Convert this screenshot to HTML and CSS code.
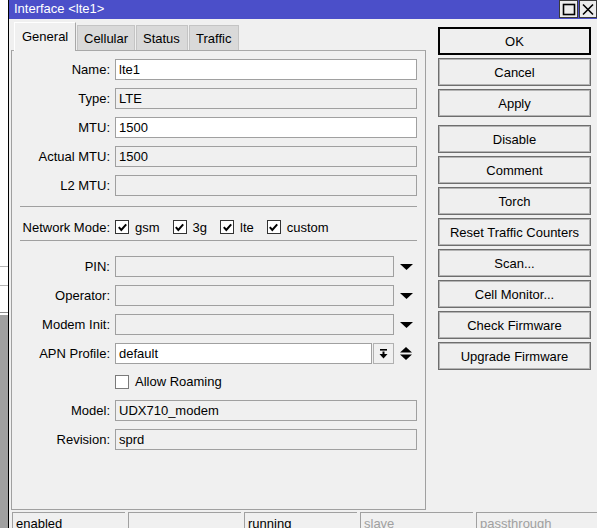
FILE: index.html
```html
<!DOCTYPE html>
<html>
<head>
<meta charset="utf-8">
<title>Interface &lt;lte1&gt;</title>
<link rel="stylesheet" href="styles.css">
</head>
<body>
<div class="screen">
  <div class="desk">
    <div class="desk-gap g0"></div>
    <div class="desk-line"></div>
    <div class="desk-gap g1"></div>
    <div class="desk-line"></div>
    <div class="desk-gap g2"></div>
    <div class="desk-line dark"></div>
    <div class="desk-gap g3"></div>
    <div class="desk-fill"></div>
  </div>
  <div class="edge"></div>
  <div class="window">
    <div class="titlebar">
      <span class="title">Interface &lt;lte1&gt;</span>
      <div class="winbtns">
        <span class="wbtn"><svg width="14" height="13" viewBox="0 0 14 13"><rect x="1.5" y="1.5" width="11" height="10" fill="none" stroke="#000" stroke-width="1.6"/></svg></span>
        <span class="wbtn"><svg width="14" height="13" viewBox="0 0 14 13"><path d="M2 1.5 L12 11.5 M12 1.5 L2 11.5" stroke="#000" stroke-width="1.6" fill="none"/></svg></span>
      </div>
    </div>
    <div class="body">
      <div class="left">
        <div class="tabs">
          <span class="tab active">General</span>
          <span class="tab">Cellular</span>
          <span class="tab">Status</span>
          <span class="tab">Traffic</span>
        </div>
        <div class="panel">
          <div class="row"><span class="label">Name:</span><span class="field edit">lte1</span></div>
          <div class="row"><span class="label">Type:</span><span class="field">LTE</span></div>
          <div class="row"><span class="label">MTU:</span><span class="field edit">1500</span></div>
          <div class="row"><span class="label">Actual MTU:</span><span class="field">1500</span></div>
          <div class="row"><span class="label">L2 MTU:</span><span class="field"></span></div>
          <div class="sep first"></div>
          <div class="netrow">
            <span class="label">Network Mode:</span>
            <span class="opt"><span class="cb on"><svg width="11" height="11" viewBox="0 0 11 11"><path d="M1.8 5.2 L4.3 8 L9.2 2.4" fill="none" stroke="#000" stroke-width="2"/></svg></span>gsm</span>
            <span class="opt"><span class="cb on"><svg width="11" height="11" viewBox="0 0 11 11"><path d="M1.8 5.2 L4.3 8 L9.2 2.4" fill="none" stroke="#000" stroke-width="2"/></svg></span>3g</span>
            <span class="opt"><span class="cb on"><svg width="11" height="11" viewBox="0 0 11 11"><path d="M1.8 5.2 L4.3 8 L9.2 2.4" fill="none" stroke="#000" stroke-width="2"/></svg></span>lte</span>
            <span class="opt"><span class="cb on"><svg width="11" height="11" viewBox="0 0 11 11"><path d="M1.8 5.2 L4.3 8 L9.2 2.4" fill="none" stroke="#000" stroke-width="2"/></svg></span>custom</span>
          </div>
          <div class="sep second"></div>
          <div class="row pin"><span class="label">PIN:</span><span class="field"></span><span class="arrow"><svg width="13" height="6" viewBox="0 0 13 6"><polygon points="0,0 13,0 6.5,6" fill="#000"/></svg></span></div>
          <div class="row"><span class="label">Operator:</span><span class="field"></span><span class="arrow"><svg width="13" height="6" viewBox="0 0 13 6"><polygon points="0,0 13,0 6.5,6" fill="#000"/></svg></span></div>
          <div class="row"><span class="label">Modem Init:</span><span class="field"></span><span class="arrow"><svg width="13" height="6" viewBox="0 0 13 6"><polygon points="0,0 13,0 6.5,6" fill="#000"/></svg></span></div>
          <div class="row"><span class="label">APN Profile:</span><span class="field edit">default</span><span class="fbtn"><svg width="9" height="10" viewBox="0 0 9 10"><rect x="1" y="0" width="7" height="1.6" fill="#000"/><rect x="3.5" y="2.5" width="2" height="3" fill="#000"/><polygon points="0.5,5 8.5,5 4.5,9.5" fill="#000"/></svg></span><span class="arrow updown"><svg width="12" height="13" viewBox="0 0 12 13"><polygon points="6,0 12,5.5 0,5.5" fill="#000"/><polygon points="0,7.5 12,7.5 6,13" fill="#000"/></svg></span></div>
          <div class="roam"><span class="label"></span><span class="opt"><span class="cb off"></span>Allow Roaming</span></div>
          <div class="row"><span class="label">Model:</span><span class="field">UDX710_modem</span></div>
          <div class="row"><span class="label">Revision:</span><span class="field">sprd</span></div>
        </div>
      </div>
      <div class="right">
        <div class="btn ok">OK</div>
        <div class="btn">Cancel</div>
        <div class="btn">Apply</div>
        <div class="btn gap">Disable</div>
        <div class="btn">Comment</div>
        <div class="btn">Torch</div>
        <div class="btn">Reset Traffic Counters</div>
        <div class="btn">Scan...</div>
        <div class="btn">Cell Monitor...</div>
        <div class="btn">Check Firmware</div>
        <div class="btn">Upgrade Firmware</div>
      </div>
    </div>
    <div class="statusbar">
      <span class="cell">enabled</span>
      <span class="cell"></span>
      <span class="cell">running</span>
      <span class="cell dim">slave</span>
      <span class="cell dim wide">passthrough</span>
    </div>
  </div>
</div>
</body>
</html>
```

FILE: styles.css
```css
* { box-sizing: border-box; }

html, body {
  margin: 0;
  padding: 0;
  background: #ffffff;
}

body {
  font-family: "Liberation Sans", Arial, sans-serif;
  font-size: 13px;
  color: #000;
}

.screen {
  display: flex;
  width: 597px;
  height: 528px;
  overflow: hidden;
}

/* desktop / window behind */
.desk {
  width: 8px;
  flex: none;
  display: flex;
  flex-direction: column;
  background: #ffffff;
}
.desk-gap.g0 { height: 266px; }
.desk-gap.g1 { height: 18px; }
.desk-gap.g2 { height: 26px; }
.desk-gap.g3 { height: 2px; }
.desk-line { height: 1px; background: #b4b4b4; }
.desk-line.dark { background: #8c8c8c; }
.desk-fill { flex: 1; background: #a0a0a0; }

.edge {
  width: 1px;
  flex: none;
  background: #000;
}

.window {
  flex: 1;
  display: flex;
  flex-direction: column;
  background: #f0f0f0;
  min-width: 0;
}

.titlebar {
  height: 19px;
  flex: none;
  background: #4b4fc9;
  display: flex;
  align-items: flex-start;
  justify-content: space-between;
}
.title {
  color: #fff;
  padding-left: 5px;
  line-height: 17px;
}
.winbtns {
  display: flex;
  gap: 1px;
}
.wbtn {
  width: 19px;
  height: 18px;
  background: #ececec;
  border: 1px solid #3a3a3a;
  display: flex;
  align-items: center;
  justify-content: center;
}
.wbtn:last-child { width: 18px; }

.body {
  display: flex;
  flex: none;
}

.left {
  width: 415px;
  margin-left: 2px;
  padding-top: 3px;
  flex: none;
}

.tabs {
  display: flex;
  align-items: flex-end;
  height: 28px;
  padding-left: 3px;
}
.tab {
  height: 25px;
  line-height: 25px;
  padding: 0 6px;
  background: #d9d9d9;
  border: 1px solid #c4c4c4;
  border-bottom: none;
  margin-right: 1px;
  position: relative;
}
.tab.active {
  height: 29px;
  margin-bottom: -1px;
  background: #f0f0f0;
  border-color: #ffffff #a8a8a8 #f0f0f0 #ffffff;
  line-height: 28px;
  padding: 0 6px 0 7px;
  z-index: 1;
}
.tab:nth-child(2) { width: 58px; }
.tab:nth-child(3) { width: 52px; }
.tab:nth-child(4) { width: 50px; }
.tab.active { width: 62px; }

.panel {
  height: 460px;
  border: 1px solid #a0a0a0;
  border-top-color: #a8a8a8;
  padding: 0 8px 0 8px;
}

.row {
  display: flex;
  align-items: center;
  height: 21px;
  margin-top: 8px;
}
.label {
  width: 90px;
  flex: none;
  text-align: right;
  margin-right: 5px;
  white-space: nowrap;
}
.field {
  flex: 1;
  height: 21px;
  line-height: 19px;
  border: 1px solid #a0a0a0;
  background: #f0f0f0;
  padding-left: 3px;
  white-space: nowrap;
}
.field.edit { background: #ffffff; }

.arrow {
  width: 23px;
  flex: none;
  display: flex;
  align-items: center;
  justify-content: center;
  padding-left: 1px;
}
.fbtn {
  width: 21px;
  height: 21px;
  flex: none;
  margin-left: 1px;
  border: 1px solid #b0b0b0;
  background: #f0f0f0;
  display: flex;
  align-items: center;
  justify-content: center;
}

.sep {
  height: 1px;
  background: #a0a0a0;
}
.sep.first { margin-top: 10px; }
.sep.second { margin-top: 0; }
.row.pin { margin-top: 15px; }

.netrow {
  height: 33px;
  padding-top: 7px;
  display: flex;
  align-items: center;
}
.netrow .label { width: 90px; }

.opt {
  display: flex;
  align-items: center;
  margin-right: 13px;
}
.cb {
  width: 14px;
  height: 14px;
  border: 1px solid #333;
  background: #fff;
  margin-right: 6px;
  display: flex;
  align-items: center;
  justify-content: center;
}
.cb.off { border-color: #7a7a7a; }

.roam {
  height: 28px;
  padding-top: 11px;
  display: flex;
  align-items: flex-start;
}
.roam .opt { line-height: 14px; }

.right {
  width: 153px;
  margin-left: 12px;
  padding-top: 8px;
  flex: none;
}
.btn {
  height: 28px;
  margin-bottom: 3px;
  border: 1px solid #6e6e6e;
  box-shadow: inset 0 0 0 1px #b4b4b4;
  background: #efefef;
  display: flex;
  align-items: center;
  justify-content: center;
  white-space: nowrap;
}
.btn.ok {
  border: 2px solid #000;
  box-shadow: none;
}
.btn.gap { margin-top: 8px; }

.statusbar {
  display: flex;
  gap: 3px;
  margin-top: 2px;
  padding-left: 3px;
  flex: 1;
}
.cell {
  width: 113px;
  flex: none;
  border-top: 1px solid #a0a0a0;
  border-left: 1px solid #a0a0a0;
  padding: 4px 0 0 3px;
  line-height: 14px;
}
.cell.wide { width: 125px; }
.cell.dim { color: #a0a0a0; }
```
